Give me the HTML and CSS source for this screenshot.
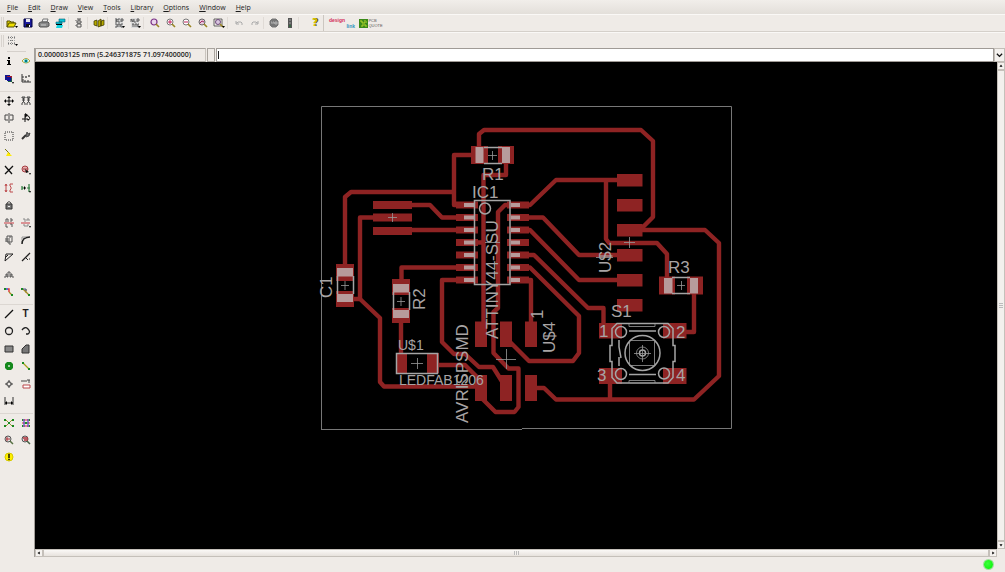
FILE: index.html
```html
<!DOCTYPE html>
<html lang="en">
<head>
<meta charset="utf-8">
<title>Board editor</title>
<link rel="stylesheet" href="styles.css">
</head>
<body>
<div class="app">
<nav class="menubar" aria-label="Main menu">
<button><u>F</u>ile</button><button><u>E</u>dit</button><button><u>D</u>raw</button><button><u>V</u>iew</button><button><u>T</u>ools</button><button><u>L</u>ibrary</button><button><u>O</u>ptions</button><button><u>W</u>indow</button><button><u>H</u>elp</button>
</nav>

<div class="toolbar" role="toolbar" aria-label="Actions">
<span class="grip"></span>
<button aria-label="Open"><svg viewBox="0 0 12 10"><path d="M1 9V3h3l1 1h3v2" fill="#d8c800" stroke="#554e00"/><path d="M1 9l2-4h7L8 9z" fill="#f0e000" stroke="#554e00"/><path d="M9 8h3l-1.500 2z"/></svg></button>
<button aria-label="Save"><svg viewBox="0 0 12 10"><path d="M2 1h8v8H2z" fill="#1b1b9c" stroke="#00003c"/><path d="M4 1h4v3H4z" fill="#e6e6ee"/><path d="M4 6h4v3H4z" fill="#111"/><path d="M7 7h1v2H7z" fill="#fff"/></svg></button>
<button aria-label="Print"><svg viewBox="0 0 12 10"><path d="M4 4l1-3h5L9 4z" fill="#eee" stroke="#777"/><path d="M1 5l2-1h7l1 1v3L9 9H2L1 8z" fill="#888" stroke="#555"/><path d="M3 7h5" stroke="#ccc"/></svg></button>
<button aria-label="CAM processor"><svg viewBox="0 0 12 10"><path d="M5 1h6v3H5zM2 4h6v2H2z" fill="#0bc5d8" stroke="#075b70" stroke-width=".6"/><path d="M3 7h6l-1 3H2z" fill="#19d3e0"/><path d="M2 6h6v1H2z"/></svg></button>
<span class="sep narrow"></span>
<button aria-label="Board"><svg viewBox="0 0 12 10" fill="none" stroke="#555"><path d="M4 1h4M6 1v2M4 3h4v2H4zM6 5v1M4 6h4v3H4z"/><path d="M3 2v1M3 7v1"/></svg></button>
<span class="sep"></span>
<button aria-label="Use library"><svg viewBox="0 0 12 10"><path d="M1 3l3-1v6L1 7zM5 3l3-2v7L5 9zM8 3l3-1v5L8 8z" fill="#b5a800" stroke="#353100" stroke-width=".7"/></svg></button>
<span class="sep"></span>
<button aria-label="Run script"><svg viewBox="0 0 12 10"><path d="M2 0h8v10H2z" fill="#ddd"/><path d="M2 1h2v1H3v1h1v1H2M5 1h2M5 1v3h2M8 1v3M8 1h2v2H8M2 6h2v3H2M5 9V6h2v3M10 6H8v3h2" fill="none" stroke="#444" stroke-width=".8"/><path d="M9 8h3l-1.500 2z"/></svg></button>
<button aria-label="Run ULP"><svg viewBox="0 0 12 10"><path d="M2 0h8v10H2z" fill="#ddd"/><path d="M2 4V1l2 3V1M5 1v3h2M8 4V1h2v2H8M3 6h2M4 6v3M6 9V6h2v3M10 6H9v3h1" fill="none" stroke="#444" stroke-width=".8"/><path d="M9 8h3l-1.500 2z"/></svg></button>
<span class="sep"></span>
<button aria-label="Zoom to fit"><svg viewBox="0 0 12 10" fill="none"><circle cx="5" cy="4" r="3" fill="#ead5ec" stroke="#7b3287" stroke-width="1.200"/><path d="M7 6l3 3" stroke="#9a8422" stroke-width="1.600"/></svg></button>
<button aria-label="Zoom in"><svg viewBox="0 0 12 10" fill="none"><circle cx="5" cy="4" r="3" fill="#fff" stroke="#777"/><path d="M3 4h4M5 2v4" stroke="#c1205b"/><path d="M7 6l3 3" stroke="#9a8422" stroke-width="1.600"/></svg></button>
<button aria-label="Zoom out"><svg viewBox="0 0 12 10" fill="none"><circle cx="5" cy="4" r="3" fill="#fff" stroke="#777"/><path d="M3 4h4" stroke="#c1205b"/><path d="M7 6l3 3" stroke="#9a8422" stroke-width="1.600"/></svg></button>
<button aria-label="Redraw"><svg viewBox="0 0 12 10" fill="none"><circle cx="5" cy="4" r="3" fill="#e4c8da" stroke="#666"/><path d="M3 5l2-2 2 1" stroke="#a32462"/><path d="M7 6l3 3" stroke="#9a8422" stroke-width="1.600"/></svg></button>
<button aria-label="Zoom selection"><svg viewBox="0 0 12 10" fill="none"><path d="M1 1h8v7H1z" stroke="#444" stroke-width=".8"/><circle cx="5" cy="4" r="2.500" fill="#d9c5e0" stroke="#6d4a7b"/><path d="M7 6l3 3" stroke="#9a8422" stroke-width="1.600"/><path d="M9 8h3l-1.500 2z" fill="#000"/></svg></button>
<span class="sep"></span>
<button aria-label="Undo"><svg viewBox="0 0 12 10" fill="none" stroke="#aaa"><path d="M3 3v3h3M3 5h1l1-1h3l1 1v2"/></svg></button>
<button aria-label="Redo"><svg viewBox="0 0 12 10" fill="none" stroke="#aaa"><path d="M9 3v3H6M9 5H8L7 4H4L3 5v2"/></svg></button>
<span class="sep narrow"></span>
<button aria-label="Stop"><svg viewBox="0 0 12 10"><path d="M4 1h4l2 2v4L8 9H4L2 7V3z" fill="#777" stroke="#777"/><path d="M3 4h1v2M5 4h1v2M7 6V4h2v2z" fill="none" stroke="#ccc" stroke-width=".7"/></svg></button>
<button aria-label="Go"><svg viewBox="0 0 12 10"><path d="M4 0h4v10H4z" fill="#555"/><circle cx="6" cy="2" r="1" fill="#888"/><circle cx="6" cy="5" r="1" fill="#888"/><circle cx="6" cy="8" r="1" fill="#2f6f3d"/></svg></button>
<span class="sep wide"></span>
<button aria-label="Help" class="help">?</button>
<span class="sep edge"></span>
<button class="brand design"><span>design</span><span class="link">link</span></button>
<button class="brand pcb" aria-label="PCB quote"><svg viewBox="0 0 9 9"><path d="M0 0h9v9H0z" fill="#3a8a18"/><path d="M1 2h2v2h3V1M3 8V6h4v2M7 3h1" fill="none" stroke="#b5d62a"/></svg><span>PCB<br>QUOTE</span></button>
</div>

<div class="toolbar options" role="toolbar" aria-label="Parameters">
<span class="grip"></span>
<button aria-label="Grid"><svg viewBox="0 0 12 10"><path d="M2 1.500h8M2 4.500h8M2 7.500h7" stroke="#777" stroke-dasharray="1 1" fill="none"/><path d="M2.500 0v9M5.500 0v9M8.500 0v9" stroke="#aaa" stroke-dasharray="1 1" fill="none"/><path d="M9 8h3l-1.500 2z"/></svg></button>
</div>

<div class="workspace">
<aside class="tools" aria-label="Tools">
<span class="handle"></span>
<div class="group two">
<button aria-label="Info"><svg viewBox="0 0 10 10"><path d="M4 1h2v2H4zM3 4h3v4h1v1H3V8h1V5H3z"/></svg></button>
<button aria-label="Show"><svg viewBox="0 0 10 10"><path d="M1 5q4-5 8 0q-4 4-8 0z" fill="#fff" stroke="#a9a23a"/><circle cx="5" cy="5" r="1.800" fill="#08bccb"/><circle cx="5" cy="5" r=".7"/></svg></button>
<button aria-label="Display"><svg viewBox="0 0 10 10"><path d="M1 1h5v5H1z" fill="#15158a"/><path d="M3 2h5v5H3z" fill="#a31f2d"/><path d="M4 4h4v4H4z" fill="#176044"/><path d="M3 3h4v4H3z" fill="#10109b"/><path d="M8 8h2l-1 2z"/></svg></button>
<button aria-label="Mark"><svg viewBox="0 0 10 10" fill="none" stroke="#333"><path d="M1 0v8h9M1 3h2M1 6h2M4 8V6M7 8V6"/><path d="M4 3h2M5 2v2M7 2h2M8 1v2" stroke-width=".8"/></svg></button>
</div>
<div class="group twelve">
<button aria-label="Move"><svg viewBox="0 0 10 10"><path d="M5 1v8M1 5h8" stroke="#111"/><path d="M5 0l2 2H3zM5 10l2-2H3zM0 5l2-2v4zM10 5L8 3v4z"/></svg></button>
<button aria-label="Copy"><svg viewBox="0 0 10 10" fill="none" stroke="#444"><path d="M1 1h3v1H1zM6 1h3v1H6zM1 4h3M6 4h3M2.500 2v4M7.500 2v4M1 9V7l1.500-1L4 7v2M6 9V7l1.500-1L9 7v2"/></svg></button>
<button aria-label="Mirror"><svg viewBox="0 0 10 10" fill="none" stroke="#444"><path d="M4 2H1v5h3M6 2h3v5H6M5 0v10"/></svg></button>
<button aria-label="Rotate"><svg viewBox="0 0 10 10" fill="none" stroke="#111"><path d="M4 1v8M1 6h6M5 2q4 1 4 4"/><path d="M4 0l3 2-3 3zM6 6h3L7 8z" fill="#111" stroke="none"/></svg></button>
<button aria-label="Group"><svg viewBox="0 0 10 10" fill="none"><path d="M1 1h8v8H1z" stroke="#333" stroke-dasharray="1 1"/></svg></button>
<button aria-label="Change"><svg viewBox="0 0 10 10" fill="none" stroke="#333"><path d="M1 8l4-4" stroke-width="2"/><path d="M5 5l1-4 1 2 2-1-1 3-3 1" fill="#777" stroke-width=".8"/></svg></button>
<button aria-label="Paste"><svg viewBox="0 0 10 10"><path d="M1 1l5 5" stroke="#76731b"/><path d="M4 4l4 4H2z" fill="#ffec00"/></svg></button>
<i></i>
<button aria-label="Delete"><svg viewBox="0 0 10 10"><path d="M1 1l7 8M9 1L1 9" stroke="#111" stroke-width="1.300"/></svg></button>
<button aria-label="Add"><svg viewBox="0 0 10 10" fill="none"><circle cx="4" cy="4" r="3" fill="#e8b1b1" stroke="#a63d42"/><path d="M2 4h5" stroke="#a63d42"/><path d="M4 4l4 3-3 1z" fill="#111"/><path d="M8 8h2l-1 2z" fill="#111"/></svg></button>
<button aria-label="Pin swap"><svg viewBox="0 0 10 10" fill="none" stroke="#bd4b4d"><path d="M9 1H6v2l1 1v2L6 7v2h3M2 1v8M1 3l1-2 1 2M1 7l1 2 1-2"/></svg></button>
<button aria-label="Replace"><svg viewBox="0 0 10 10"><path d="M1 3v4M1 5h3M6 5h3M8 1v8" fill="none" stroke="#2b7b3c" stroke-width="1.200"/><path d="M3 3l2 2-2 2z"/><path d="M8 8h2l-1 2z"/></svg></button>
<button aria-label="Lock"><svg viewBox="0 0 10 10"><path d="M3 4V3q2-3 4 0v1" fill="none" stroke="#444"/><path d="M2 4h6v5H2z" fill="#777" stroke="#333"/><path d="M4 6h2v1H4z" fill="#eee"/></svg></button>
<i></i>
<button aria-label="Name"><svg viewBox="0 0 10 10" fill="none"><path d="M2 4V1h2v3M6 1h2v2H6M2 6v3h2M6 6h2v3" stroke="#555"/><path d="M0 5h10" stroke="#c63b43"/></svg></button>
<button aria-label="Value"><svg viewBox="0 0 10 10" fill="none"><path d="M2 1h2v3M6 3V1h2v2M2 7h2v2M6 9V7h2" stroke="#888"/><path d="M0 5h9" stroke="#c63b43"/><path d="M8 8h2l-1 2z" fill="#111"/></svg></button>
<button aria-label="Smash"><svg viewBox="0 0 10 10" fill="none" stroke="#555"><path d="M3 1h5v6H3zM1 4h5M1 6h5M5 2h2M5 7v2h2"/></svg></button>
<button aria-label="Miter"><svg viewBox="0 0 10 10" fill="none"><path d="M1 9Q1 2 9 2" stroke="#222" stroke-width="1.500"/><path d="M1 5V2h4" stroke="#999"/></svg></button>
<button aria-label="Split"><svg viewBox="0 0 10 10" fill="none" stroke="#222"><path d="M1 9l1-7h7M1 9l8-7M2 5l2-2"/></svg></button>
<button aria-label="Optimize"><svg viewBox="0 0 10 10" fill="none" stroke="#222"><path d="M1 9l8-8" stroke-width="1.300"/><path d="M5 6l2 2M8 7h1"/></svg></button>
<button aria-label="Meander"><svg viewBox="0 0 10 10" fill="none" stroke="#555"><path d="M0 7h2V4h1v3h1V2h2v5h1V4h1v3h2"/></svg></button>
<i></i>
<button aria-label="Route"><svg viewBox="0 0 10 10" fill="none"><path d="M1 2h3" stroke="#2638bd" stroke-width="1.400"/><path d="M4 2h1v3" stroke="#df3131" stroke-width="1.400"/><path d="M5 5l3 3" stroke="#a38a22" stroke-width="1.300"/><path d="M0 1h2v2H0zM7 7h2v2H7z" fill="#188a20"/></svg></button>
<button aria-label="Ripup"><svg viewBox="0 0 10 10" fill="none"><path d="M5 2v4M2 2l6 6" stroke="#a38a22" stroke-width="1.300"/><path d="M2 2h3v2" stroke="#4b5998"/><path d="M0 1h2v2H0zM7 7h2v2H7z" fill="#188a20"/></svg></button>
</div>
<div class="group six">
<button aria-label="Line"><svg viewBox="0 0 10 10"><path d="M1 9l8-8" stroke="#111" stroke-width="1.300"/></svg></button>
<button aria-label="Text" class="letter">T</button>
<button aria-label="Circle"><svg viewBox="0 0 10 10"><circle cx="5" cy="5" r="3.500" fill="none" stroke="#222" stroke-width="1.300"/></svg></button>
<button aria-label="Arc"><svg viewBox="0 0 10 10"><path d="M1 4q3-4 6-1t0 5H5" fill="none" stroke="#222" stroke-width="1.300"/></svg></button>
<button aria-label="Rectangle"><svg viewBox="0 0 10 10"><path d="M1 2h8v6H1z" fill="#888" stroke="#333"/></svg></button>
<button aria-label="Polygon"><svg viewBox="0 0 10 10"><path d="M1 9V5l4-4h3v8z" fill="#777" stroke="#333"/></svg></button>
<button aria-label="Via"><svg viewBox="0 0 10 10"><path d="M3 1h4l2 2v4L7 9H3L1 7V3z" fill="#15891d"/><circle cx="5" cy="5" r="1" fill="#d9e5d9"/></svg></button>
<button aria-label="Signal"><svg viewBox="0 0 10 10"><path d="M2 2l6 6" stroke="#a6a01b" stroke-width="1.300"/><path d="M1 1h2v2H1zM7 7h2v2H7z" fill="#188a20"/></svg></button>
<button aria-label="Hole"><svg viewBox="0 0 10 10" fill="none" stroke="#444"><circle cx="5" cy="5" r="2.300"/><path d="M5 1v3M5 6v3M1 5h3M6 5h3"/></svg></button>
<button aria-label="Attribute"><svg viewBox="0 0 10 10" fill="none"><path d="M1 1v2M3 1v2M5 1v2M6 1h3M8 1v3" stroke="#444"/><path d="M2 6h7v3H2z" fill="#fff" stroke="#b9474b"/></svg></button>
<button aria-label="Dimension"><svg viewBox="0 0 10 10"><path d="M1 1v8M9 1v8M1 7h8" stroke="#333"/><path d="M1 7l2-2v4zM9 7L7 5v4z"/></svg></button>
</div>
<div class="group three">
<button aria-label="Ratsnest"><svg viewBox="0 0 10 10"><path d="M1 1l8 8M9 1L1 9" stroke="#92952e"/><path d="M0 1h2v2H0zM8 1h2v2H8zM4 4h2v2H4zM0 7h2v2H0zM8 7h2v2H8z" fill="#188a20"/></svg></button>
<button aria-label="Autorouter"><svg viewBox="0 0 10 10"><path d="M1 2h8M1 5h8M1 8h8" stroke="#d93043"/><path d="M3 1v8M7 1v8" stroke="#3030c6"/><path d="M1 2h1M4 5h2M8 8h1M1 8h1M8 2h1" stroke="#189324" stroke-width="2"/></svg></button>
<button aria-label="ERC"><svg viewBox="0 0 10 10" fill="none"><circle cx="4" cy="4" r="3" fill="#ddd" stroke="#555"/><path d="M2 4h4M3 2v4" stroke="#b3343c"/><path d="M6 6l3 3" stroke="#577143" stroke-width="1.500"/></svg></button>
<button aria-label="DRC"><svg viewBox="0 0 10 10" fill="none"><circle cx="4" cy="4" r="3" fill="#ddd" stroke="#555"/><path d="M2 3h5M3 5h4" stroke="#b3343c" stroke-width="1.300"/><path d="M6 6l3 3" stroke="#476143" stroke-width="1.500"/></svg></button>
<button aria-label="Errors"><svg viewBox="0 0 10 10"><circle cx="5" cy="5" r="4" fill="#fff000" stroke="#d6c900"/><path d="M4.500 2h1v4h-1zM4.500 7h1v1h-1z" stroke="#111" stroke-width=".4"/></svg></button>
</div>
</aside>

<main class="editor">
<div class="command">
<output class="coords">0.000003125 mm (5.246371875 71.097400000)</output>
<span class="mode"></span>
<input class="entry" type="text" aria-label="Command line">
<button class="history" aria-label="Command history"><svg viewBox="0 0 8 8"><path d="M1 2l3 3 3-3" fill="none" stroke="#111" stroke-width="1.500"/></svg></button>
</div>
<div class="view">
<svg class="board" viewBox="35 62 962 487" role="img" aria-label="Circuit board layout">
<path class="frame" d="M321.500 429.500V106.500H731.500V428.500H522"/><path class="frame" d="M321 429.500h201"/>
<g class="trace">
<path d="M345 266V197l6-5h103M472 155h-18v50h14M412 205h18l12 12.500h18M376 217.500h-16V299M412 230h48"/>
<path d="M479 148v-14l5-4h157l12 11v76l-13 13M506 163v12h-22.500v155M474 242.500h9"/>
<path d="M512 205h-7l-7 7v96l-4.500 4v41l15 15.500h10V407l-4 5h-19l-14-14"/>
<path d="M528 205h2l26-25h63M528 217.500h15l36 37.500h40M528 230h2l49 50h40M528 255h6l54 53h15.500v18"/>
<path d="M528 267.500h2L579 316v37l-6 8h-44l-22-22M528 280h3v44"/>
<path d="M458 267.500h-56.500V281M458 280h-16v62l12 12h11l14 13h14l10 16M436 365h29l17 17"/>
<path d="M352 299h8l20 19v64l4 4.500h94M401 320v36M535 388h9l12 11.500h138l25-23.500V243l-14-13h-64"/>
<path d="M606 180v59l3 4h48l10 11v24M694 292v40h-10M610 382v17"/>
</g>
<g class="pad">
<path d="M373 201h39v8h-39zM373 213.500h39v8h-39zM373 227h39v8h-39z"/>
<path d="M471 146h17v18h-17zM498 146h16v18h-16zM336 264h18v17h-18zM336 291h18v16h-18zM392 279h18v16h-18zM392 308h18v15h-18zM659 276.500h16v18h-16zM687 276.500h16v18h-16zM396 353h11v20h-11zM427 353h12v20h-12z"/>
<path d="M617 174h25.500v12.500H617zM617 199h25.500v12.500H617zM617 224h25.500v12.500H617zM617 249h25.500v12.500H617zM617 274h25.500v12.500H617zM617 299h25.500v12.500H617z"/>
<path d="M475 321.500h12V347h-12zM500 321.500h12V347h-12zM525 321.500h12V347h-12zM475 375h12v26h-12zM500 375h12v26h-12zM525 375h12v26h-12z"/>
<path d="M599 323h23v15.500h-23zM663 323h23.500v15.500H663zM599 368h23v16h-23zM663 368h23.500v16H663z"/>
</g>
<path class="pins" d="M456 205h22M456 217.500h22M456 230h22M456 242.500h22M456 255h22M456 267.500h22M456 280h22M507 205h22M507 217.500h22M507 230h22M507 242.500h22M507 255h22M507 267.500h22M507 280h22"/>
<path class="leads" d="M464 205h10M464 217.500h10M464 230h10M464 242.500h10M464 255h10M464 267.500h10M464 280h10M511 205h9M511 217.500h9M511 230h9M511 242.500h9M511 255h9M511 267.500h9M511 280h9"/>
<path class="cap" d="M475.500 147h8v16h-8zM502 147h8v16h-8zM337 268h16v8.500h-16zM337 294h16v8h-16zM393 284h16v8.500h-16zM393 310h16v8h-16zM664 278h8.500v15.500H664zM690 278h8v15.500h-8z"/>
<g class="silk">
<path d="M474.500 200.500H510V284.500H474.500z"/><circle cx="485" cy="208.500" r="5.500"/>
<path d="M484 147.500h18M484 163.500h18M337.500 276v18M353.500 276v18M393.500 292v18M409.500 292v18M672 277.500h18M672 293.500h18M396.500 353.500H437.500V373.500H396.500z"/>
<path d="M617 323.500h51l5 5v17h2v16h-2v16l-5 5.500h-51l-5-5.500v-16h-2v-16h2v-17z"/>
<circle cx="621" cy="332" r="5.500"/><circle cx="664" cy="332" r="5.500"/><circle cx="621" cy="374" r="5.500"/><circle cx="664" cy="373.500" r="5.500"/>
<circle cx="642.500" cy="353" r="17.500"/><circle cx="642.500" cy="353" r="3"/>
<path d="M629 331h27M629 374.500h27M619 340v7l2 11M619 357v9"/>
</g>
<g class="fine">
<path d="M629.500 340.500h25v25h-25zM629 324v2.500h26V324M629 383v-2.500h26V383"/><circle cx="642.500" cy="353" r="6"/>
<path d="M634 353.500h17M642.500 345v17M488 155.500h9M492.500 151v9M388 217.500h9M392.500 213v9M341 285.500h8M345 281v9M397 301.500h8M401 297v9M677 285.500h8M681.500 281v9M411 363.500h12M417.500 358v11M485 242.500h15M624 242.500h11M629.500 237v11M596 257.500h17M496 359.500h20M506.500 349v20"/>
</g>
<g class="label">
<text x="482" y="180">R1</text><text x="472" y="198">IC1</text><text x="668" y="273">R3</text><text x="611" y="317">S1</text>
<text x="599" y="337">1</text><text x="676" y="338">2</text><text x="597" y="381">3</text><text x="676" y="381">4</text>
<text transform="translate(332 298) rotate(-90)">C1</text><text transform="translate(425 310) rotate(-90)">R2</text>
<text transform="translate(468 423) rotate(-90)">AVRISPSMD</text><text transform="translate(498 339) rotate(-90)">ATTINY44-SSU</text>
<text transform="translate(611 273) rotate(-90)">U$2</text><text transform="translate(555 353) rotate(-90)">U$4</text><text transform="translate(543 319) rotate(-90)">1</text>
<text class="small" x="398" y="350">U$1</text><text class="small" x="399" y="385">LEDFAB1206</text>
</g>
</svg>
</div>
<div class="bar vertical" role="presentation"><button aria-label="Scroll up"><svg viewBox="0 0 8 8"><path d="M4 2l2 3H2z"/></svg></button><span class="thumb"></span><button aria-label="Scroll down"><svg viewBox="0 0 8 8"><path d="M4 6L2 3h4z"/></svg></button></div>
<div class="bar horizontal" role="presentation"><button aria-label="Scroll left"><svg viewBox="0 0 8 8"><path d="M2 4l3-2v4z"/></svg></button><span class="thumb"></span><button aria-label="Scroll right"><svg viewBox="0 0 8 8"><path d="M6 4L3 2v4z"/></svg></button></div>
</main>
</div>
<footer class="status"><span class="led"></span></footer>
</div>
</body>
</html>
```
FILE: styles.css
```css
* { box-sizing: border-box; }
body { margin: 0; background: #efebe7; color: #1c1c1c; font: 7px/10px "Open Sans", "Noto Sans", sans-serif; }
button { margin: 0; padding: 0; border: 0; background: none; color: inherit; font: inherit; }
svg { display: block; }
.app { display: flex; flex-direction: column; height: 100vh; }

.menubar { display: flex; gap: 10px; height: 14px; padding: 1px 7px 0; background: linear-gradient(#f1eeea, #e3dfda); font-weight: 500; }
.menubar u { text-underline-offset: 1px; }

.toolbar { display: flex; align-items: center; height: 18px; border-top: 1px solid #faf8f6; border-bottom: 1px solid #d5d0ca; }
.toolbar button { flex: none; width: 16px; display: flex; justify-content: center; }
.toolbar svg { width: 12px; height: 10px; }
.options { height: 16px; border-bottom: 0; }
.grip { width: 3px; height: 12px; margin-left: 1px; border: 1px solid #d8d3ce; border-width: 0 1px; }
.sep { width: 4px; height: 12px; border-left: 1px solid #e0dbd6; }
.sep.narrow { width: 3px; }
.sep.wide { width: 9px; }
.sep.edge { width: 6px; height: 16px; border-color: #ccc7c1; }
.toolbar .help { color: #d5c400; font: bold 10px/12px "DejaVu Sans", sans-serif; text-shadow: 1px 0 #443f00; }
.toolbar .brand { width: 26px; }
.toolbar .design { flex-direction: column; color: #d32f57; font: bold 5px/6px "Liberation Sans", sans-serif; text-align: left; }
.design .link { align-self: flex-end; color: #2e93bd; }
.toolbar .pcb { width: 24px; margin-left: 4px; align-items: center; color: #555; font: 4px/5px "Liberation Sans", sans-serif; text-align: left; }
.toolbar .pcb svg { width: 9px; height: 9px; }

.workspace { flex: 1; display: flex; min-height: 0; }
.tools { width: 35px; flex: none; padding: 3px 1px 0 0; border-right: 1px solid #a39f9a; }
.handle { display: block; width: 19px; height: 1px; margin: 0 auto; border-top: 1px solid #d5d0cb; }
.group { display: grid; grid-template-columns: 17px 17px; grid-auto-rows: 1fr; margin-bottom: 3px; }
.group + .group { border-top: 1px solid #dcd7d2; }
.group button { display: flex; align-items: center; justify-content: center; }
.group svg { width: 10px; height: 10px; }
.two { height: 36px; }
.twelve { height: 210px; }
.six { height: 106px; }
.three { height: 53px; }
.group .letter { font: bold 10px/10px "Liberation Sans", sans-serif; }

.editor { flex: 1; min-width: 0; display: grid; grid-template: 14px minmax(0, 1fr) 8px / minmax(0, 1fr) 8px; }
.command { grid-column: 1 / -1; display: flex; align-items: stretch; }
.coords { width: 171px; padding: 1px 2px; border: 1px solid #a9a49e; border-right-color: #c9c4be; white-space: nowrap; font-weight: 600; }
.mode { width: 8px; margin: 0 1px; border: 1px solid #a9a49e; }
.entry { flex: 1; min-width: 0; padding: 0 4px; border: 1px solid #a09b96; background: #fff linear-gradient(#222, #222) 1px 50% / 1px 8px no-repeat; font: inherit; outline: 0; }
.history { width: 11px; padding: 2px 1px; border: 1px solid #c3beb8; background: #f4f1ee; }
.view { background: #000; overflow: hidden; }
.board { width: 100%; height: 100%; }
.bar { display: flex; background: #f5f2ef; }
.bar.vertical { flex-direction: column; }
.bar button { flex: none; width: 8px; height: 8px; border: 1px solid #c5c0ba; }
.bar svg { width: 6px; height: 6px; }
.thumb { flex: 1; border: 1px solid #c5c0ba; }
.vertical .thumb { background: repeating-linear-gradient(#bbb 0 1px, #f3f0ed 1px 2px) center / 4px 5px no-repeat, #f3f0ed; }
.horizontal .thumb { background: repeating-linear-gradient(90deg, #bbb 0 1px, #f3f0ed 1px 2px) center / 5px 4px no-repeat, linear-gradient(#faf8f6, #e7e2dd); }
.status { display: flex; align-items: center; justify-content: flex-end; height: 15px; padding-right: 12px; }
.led { width: 9px; height: 9px; border-radius: 50%; background: radial-gradient(circle at 40% 40%, #3cff3c, #00f000); box-shadow: 0 0 0 1px #9fdc9b; }

.frame { fill: none; stroke: #777; }
.trace { fill: none; stroke: #8e2323; stroke-width: 4.4; stroke-linejoin: round; }
.pad { fill: #8e2323; }
.pins { stroke: #8e2323; stroke-width: 7; }
.leads { stroke: #b79b9b; stroke-width: 4; }
.cap { fill: #b79b9b; }
.silk { fill: none; stroke: #a5a5a5; stroke-width: 1.5; }
.fine { fill: none; stroke: #999; stroke-width: 1; stroke-opacity: .8; }
.label { fill: #a8a4a4; font: 17px "Liberation Sans", Arial, sans-serif; }
.small { font-size: 14px; }
```
